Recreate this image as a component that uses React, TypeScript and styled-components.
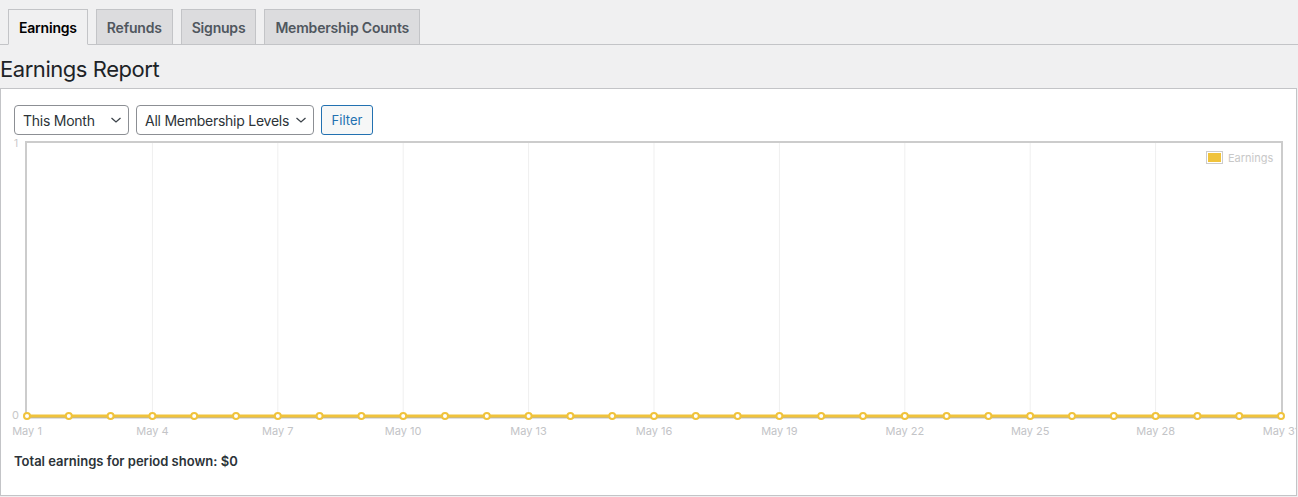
import styled, { createGlobalStyle } from "styled-components";

const GlobalStyle = createGlobalStyle`
  body {
    margin: 0;
    background: #f0f0f1;
    font-family: Inter, "Liberation Sans", sans-serif;
    color: #3c434a;
  }
`;

const tabs = ["Earnings", "Refunds", "Signups", "Membership Counts"];

// chart geometry, in page pixels
const PLOT_LEFT = 27;
const PLOT_RIGHT = 1281;
const PLOT_TOP = 143;
const PLOT_BOTTOM = 416;
const DAYS = 31;
const step = (PLOT_RIGHT - PLOT_LEFT) / (DAYS - 1);
const dayX = (i: number) => PLOT_LEFT + i * step;

const earnings = Array.from({ length: DAYS }, () => 0);

function Chevron() {
  return (
    <svg width="12" height="8" viewBox="0 0 12 8">
      <path d="M1.5 2 L6 6 L10.5 2" fill="none" stroke="#3c434a" strokeWidth="1.3" />
    </svg>
  );
}

function EarningsChart() {
  const ys = earnings.map((v) => PLOT_BOTTOM - v * (PLOT_BOTTOM - PLOT_TOP));
  const line = earnings.map((_, i) => `${i === 0 ? "M" : "L"}${dayX(i)} ${ys[i]}`).join(" ");
  const ticks = Array.from({ length: 11 }, (_, k) => k * 3);

  return (
    <ChartSvg viewBox="1 135 1295 310" width="1295" height="310">
      {ticks.slice(1, -1).map((d) => (
        <line key={d} x1={dayX(d)} x2={dayX(d)} y1={PLOT_TOP} y2={PLOT_BOTTOM} stroke="#efefef" strokeWidth="1" />
      ))}
      <rect x={26} y={142} width={1256} height={275} fill="none" stroke="#cccccc" strokeWidth="2" />
      <text x={18} y={147} fontSize="10" fill="#c8c8c8" textAnchor="end">1</text>
      <text x={19} y={419} fontSize="11" fill="#c8c8c8" textAnchor="end">0</text>
      {ticks.map((d) => (
        <text key={d} x={dayX(d)} y={435} fontSize="11" fill="#c3c4c7" textAnchor="middle">
          May {d + 1}
        </text>
      ))}
      <path d={line} transform="translate(0 2)" fill="none" stroke="rgba(0,0,0,0.12)" strokeWidth="2" />
      <path d={line} fill="none" stroke="#f0c33c" strokeWidth="3" />
      {earnings.map((_, i) => (
        <circle key={i} cx={dayX(i)} cy={ys[i]} r="3" fill="#fff" stroke="#f0c33c" strokeWidth="2" />
      ))}
      <rect x={1206.5} y={151.5} width={16} height={12} fill="#fff" stroke="#cccccc" strokeWidth="1" />
      <rect x={1208} y={153} width={13} height={9} fill="#f0c33c" />
      <text x={1228} y={162} fontSize="11" fill="#c8c8c8">Earnings</text>
    </ChartSvg>
  );
}

export default function App() {
  return (
    <>
      <GlobalStyle />
      <TabBar>
        {tabs.map((t, i) => (
          <Tab key={t} $active={i === 0}>
            {t}
          </Tab>
        ))}
      </TabBar>
      <Title>Earnings Report</Title>
      <Panel>
        <Toolbar>
          <Select style={{ width: 115 }}>
            This Month
            <Chevron />
          </Select>
          <Select style={{ width: 178 }}>
            All Membership Levels
            <Chevron />
          </Select>
          <FilterButton>Filter</FilterButton>
        </Toolbar>
        <EarningsChart />
        <Total>Total earnings for period shown: $0</Total>
      </Panel>
    </>
  );
}

const TabBar = styled.div`
  display: flex;
  gap: 8px;
  padding: 9px 0 0 8px;
  border-bottom: 1px solid #c3c4c7;
  height: 35px;
`;

const Tab = styled.div<{ $active: boolean }>`
  box-sizing: border-box;
  height: ${(p) => (p.$active ? "36px" : "35px")};
  padding: 0 10px;
  display: flex;
  align-items: center;
  font-size: 14px;
  font-weight: 600;
  letter-spacing: -0.2px;
  border: 1px solid #c3c4c7;
  border-bottom: ${(p) => (p.$active ? "1px solid #f0f0f1" : "none")};
  background: ${(p) => (p.$active ? "#f0f0f1" : "#dcdcde")};
  color: ${(p) => (p.$active ? "#000" : "#50575e")};
  margin-bottom: ${(p) => (p.$active ? "-1px" : "0")};
`;

const Title = styled.h1`
  margin: 0;
  padding: 10px 0 4px;
  height: 29px;
  font-size: 22px;
  font-weight: 400;
  letter-spacing: -0.45px;
  line-height: 29px;
  color: #1d2327;
`;

const Panel = styled.div`
  box-sizing: border-box;
  width: 1297px;
  height: 408px;
  background: #fff;
  border: 1px solid #c3c4c7;
  overflow: hidden;
`;

const Toolbar = styled.div`
  display: flex;
  gap: 7px;
  padding: 16px 0 0 13px;
  height: 30px;
`;

const Select = styled.div`
  box-sizing: border-box;
  height: 30px;
  display: flex;
  align-items: center;
  justify-content: space-between;
  padding: 0 6px 0 8px;
  border: 1px solid #8c8f94;
  border-radius: 4px;
  font-size: 14px;
  letter-spacing: -0.25px;
  color: #2c3338;
  background: #fff;
`;

const FilterButton = styled.div`
  box-sizing: border-box;
  height: 30px;
  width: 52px;
  display: flex;
  align-items: center;
  justify-content: center;
  border: 1px solid #2271b1;
  border-radius: 3px;
  background: #f6f7f7;
  color: #2271b1;
  font-size: 13px;
`;

const ChartSvg = styled.svg`
  display: block;
  font-family: Inter, "Liberation Sans", sans-serif;
`;

const Total = styled.div`
  padding: 8px 0 0 13px;
  font-size: 13px;
  font-weight: 600;
  color: #2c3338;
`;
